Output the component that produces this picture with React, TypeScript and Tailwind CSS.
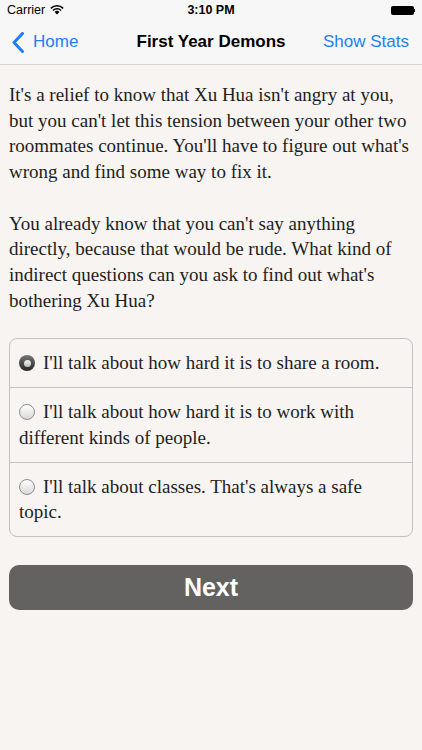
function Radio({ checked }: { checked?: boolean }) {
  if (checked) {
    return (
      <span className="mr-[8px] inline-block h-[16px] w-[16px] translate-y-[2px] rounded-full bg-gradient-to-b from-[#777777] to-[#262626] p-[4.5px] align-baseline">
        <span className="block h-full w-full rounded-full bg-gradient-to-b from-[#f2f2f2] to-[#bdbdbd]" />
      </span>
    )
  }
  return (
    <span className="mr-[8px] inline-block h-[16px] w-[16px] translate-y-[2px] rounded-full border border-[#8e8e8e] bg-gradient-to-b from-[#ffffff] to-[#d9d9d9] align-baseline" />
  )
}

function Lines({ lines }: { lines: string[] }) {
  return (
    <>
      {lines.map((l) => (
        <span key={l} className="block whitespace-nowrap">
          {l}
        </span>
      ))}
    </>
  )
}

function App() {
  const serif = "font-['Liberation_Serif',serif]"
  return (
    <div className="flex h-[750px] w-[422px] flex-col bg-[#f7f4f1] font-['Liberation_Sans',sans-serif]">
      <div className="bg-[#f7f7f7]">
        <div className="relative flex h-[20px] items-center px-[7px] text-[12.5px] text-black">
          <span>Carrier</span>
          <svg className="ml-[5px]" width="14" height="10" viewBox="0 0 14 10">
            <path d="M7 9.5 L4.6 7 A3.4 3.4 0 0 1 9.4 7 Z" fill="#000" />
            <path d="M2.4 4.9 A6.5 6.5 0 0 1 11.6 4.9 L10.5 6 A5 5 0 0 0 3.5 6 Z" fill="#000" />
            <path d="M0.3 2.8 A9.5 9.5 0 0 1 13.7 2.8 L12.6 3.9 A8 8 0 0 0 1.4 3.9 Z" fill="#000" />
          </svg>
          <span className="absolute left-1/2 -translate-x-1/2 font-semibold">3:10 PM</span>
          <div className="ml-auto flex items-center">
            <div className="h-[9px] w-[23px] rounded-[2px] bg-black" />
            <div className="h-[3px] w-[1.5px] bg-black" />
          </div>
        </div>
        <div className="relative flex h-[45px] items-center border-b border-[#d4d4d4] pl-[12px] pr-[13px] text-[17px]">
          <div className="flex items-center text-[#1d7ff5]">
            <svg width="13" height="21" viewBox="0 0 13 21" className="mr-[8px]">
              <path d="M10.5 1.5 L2 10.5 L10.5 19.5" stroke="#1d7ff5" strokeWidth="3" fill="none" strokeLinecap="round" strokeLinejoin="round" />
            </svg>
            <span>Home</span>
          </div>
          <span className="absolute left-1/2 -translate-x-1/2 font-semibold text-black">First Year Demons</span>
          <span className="ml-auto text-[#1d7ff5]">Show Stats</span>
        </div>
      </div>

      <div className={`px-[9px] pt-[17px] text-[19px] leading-[25.7px] text-[#1e1e1e] ${serif}`}>
        <p>
          <Lines
            lines={[
              "It's a relief to know that Xu Hua isn't angry at you,",
              "but you can't let this tension between your other two",
              "roommates continue. You'll have to figure out what's",
              'wrong and find some way to fix it.',
            ]}
          />
        </p>
        <p className="mt-[25.7px]">
          <Lines
            lines={[
              "You already know that you can't say anything",
              'directly, because that would be rude. What kind of',
              "indirect questions can you ask to find out what's",
              'bothering Xu Hua?',
            ]}
          />
        </p>
      </div>

      <div className={`mx-[9px] mt-[25px] rounded-[8px] border border-[#c2c2c2] text-[19px] leading-[25.5px] text-[#1e1e1e] ${serif}`}>
        <div className="px-[9px] pb-[11.5px] pt-[11px]">
          <Radio checked />
          I'll talk about how hard it is to share a room.
        </div>
        <div className="border-t border-[#c2c2c2] px-[9px] pb-[11.5px] pt-[11px]">
          <Radio />
          I'll talk about how hard it is to work with
          <br />
          different kinds of people.
        </div>
        <div className="border-t border-[#c2c2c2] px-[9px] pb-[11.5px] pt-[11px]">
          <Radio />
          I'll talk about classes. That's always a safe
          <br />
          topic.
        </div>
      </div>

      <button
        type="button"
        className="mx-[9px] mt-[28px] h-[45px] rounded-[10px] bg-[#646260] text-[25px] font-semibold text-white"
      >
        Next
      </button>
    </div>
  )
}

export default App
